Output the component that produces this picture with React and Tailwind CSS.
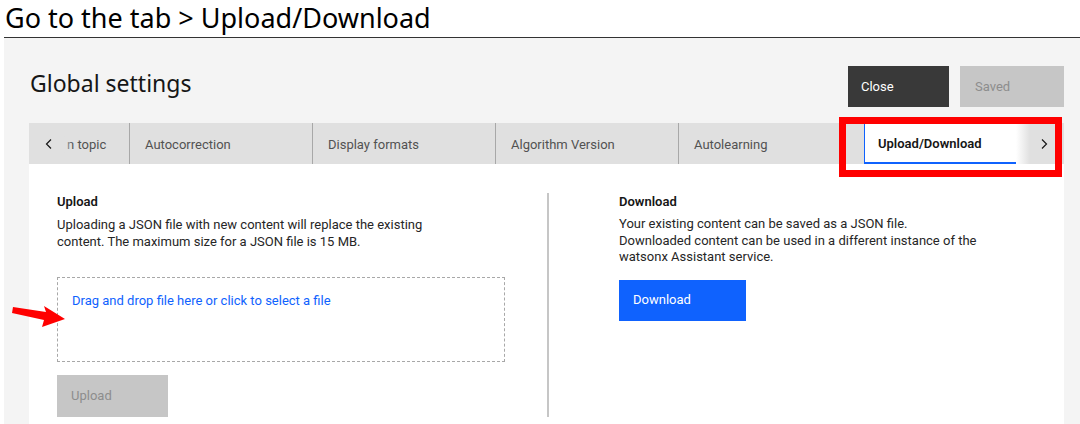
import React from 'react';

const tabs = ['Autocorrection', 'Display formats', 'Algorithm Version', 'Autolearning'];

const Chevron = ({ dir = 'left' }) => (
  <svg width="16" height="16" viewBox="0 0 16 16" fill="none" stroke="#161616" strokeWidth="1.2">
    {dir === 'left' ? <path d="M10 3.5 5.5 8l4.5 4.5" /> : <path d="M6 3.5 10.5 8 6 12.5" />}
  </svg>
);

const App = () => {
  return (
    <div
      className="relative w-[1080px] h-[424px] overflow-hidden bg-white flex flex-col"
      style={{ fontFamily: 'Roboto, "Noto Sans", sans-serif' }}
    >
      {/* Caption */}
      <div className="h-[38px] ml-[4px] border-b border-[#333] flex items-center shrink-0">
        <h1
          className="text-[27px] leading-none text-black pl-[1px] -mt-[2px]"
          style={{ fontFamily: '"Noto Sans", sans-serif' }}
        >
          Go to the tab &gt; Upload/Download
        </h1>
      </div>

      {/* Settings panel */}
      <div className="ml-[4px] flex-1 bg-[#f4f4f4] pl-[25px] pr-[16px] pt-[28px] flex flex-col">
        <div className="flex items-center justify-between h-[41px]">
          <h2
            className="text-[23px] text-[#161616] pl-[1px] -mt-[7px]"
            style={{ fontFamily: '"Noto Sans", sans-serif' }}
          >
            Global settings
          </h2>
          <div className="flex gap-[11px]">
            <button className="w-[101px] h-[41px] bg-[#393939] text-white text-[13px] text-left pl-[13px]">Close</button>
            <button className="w-[104px] h-[41px] bg-[#c6c6c6] text-[#8d8d8d] text-[13px] text-left pl-[15px]">Saved</button>
          </div>
        </div>

        {/* Tabs */}
        <div className="mt-[16px] h-[41px] bg-[#e0e0e0] flex text-[13px] text-[#525252]">
          <div className="w-[101px] flex items-center border-r border-[#a8a8a8] overflow-hidden pt-[3px]">
            <div className="pl-[12px] pr-[4px] flex items-center -mt-[2px]"><Chevron dir="left" /></div>
            <span className="relative pl-[6px]">
              n topic
              <span className="absolute left-0 top-0 bottom-0 w-[12px] bg-gradient-to-r from-[#e0e0e0] to-transparent" />
            </span>
          </div>
          {tabs.map((t, i) => (
            <div
              key={t}
              className={`w-[183px] flex items-center pl-[15px] pt-[3px] ${i < 3 ? 'border-r border-[#a8a8a8]' : ''}`}
            >
              {t}
            </div>
          ))}
          <div className="w-[2px]" />
          <div className="flex flex-1 items-stretch">
            <div className="w-[152px] bg-white border-l border-[#0f62fe] border-b-2 border-b-[#0f62fe] flex items-center pl-[13px] pt-[2px] font-semibold text-[#161616] mt-[1px]">
              Upload/Download
            </div>
            <div className="w-[14px] bg-gradient-to-r from-white to-[#e0e0e0] mt-[1px]" />
            <div className="flex-1 flex items-center pl-[6px]"><Chevron dir="right" /></div>
          </div>
        </div>

        {/* Content */}
        <div className="flex-1 bg-white flex pt-[29px] pl-[28px] text-[13px] text-[#161616]">
          <div className="w-[448px]">
            <h3 className="font-semibold leading-[18px]">Upload</h3>
            <p className="mt-[5px] leading-[17px] text-[#262626]">
              Uploading a JSON file with new content will replace the existing<br />
              content. The maximum size for a JSON file is 15 MB.
            </p>
            <div className="mt-[27px] h-[85px] border border-dashed border-[#a8a8a8] pl-[14px] pt-[13px]">
              <span className="text-[#0f62fe] leading-[17px]">Drag and drop file here or click to select a file</span>
            </div>
            <button className="mt-[13px] w-[111px] h-[42px] bg-[#c6c6c6] text-[#8d8d8d] text-left pl-[14px]">Upload</button>
          </div>
          <div className="ml-[42px] w-[2px] bg-[#c6c6c6] h-[224px]" />
          <div className="pl-[70px]">
            <h3 className="font-semibold leading-[18px]">Download</h3>
            <p className="mt-[5px] leading-[16.5px] text-[#262626]">
              Your existing content can be saved as a JSON file.<br />
              Downloaded content can be used in a different instance of the<br />
              watsonx Assistant service.
            </p>
            <button className="mt-[14px] w-[127px] h-[41px] bg-[#0f62fe] text-white text-left pl-[14px]">Download</button>
          </div>
        </div>
      </div>

      {/* Annotation: red highlight box */}
      <div className="absolute left-[839px] top-[117px] w-[223px] h-[60px] border-[7px] border-[#ff0000]" />

      {/* Annotation: red arrow */}
      <svg className="absolute left-[10px] top-[302px]" width="60" height="30" viewBox="0 0 60 30">
        <polygon points="3,5 36,10 34,4 55,17 32,25 34,18 2,11" fill="#ff0000" />
      </svg>
    </div>
  );
};

export default App;
